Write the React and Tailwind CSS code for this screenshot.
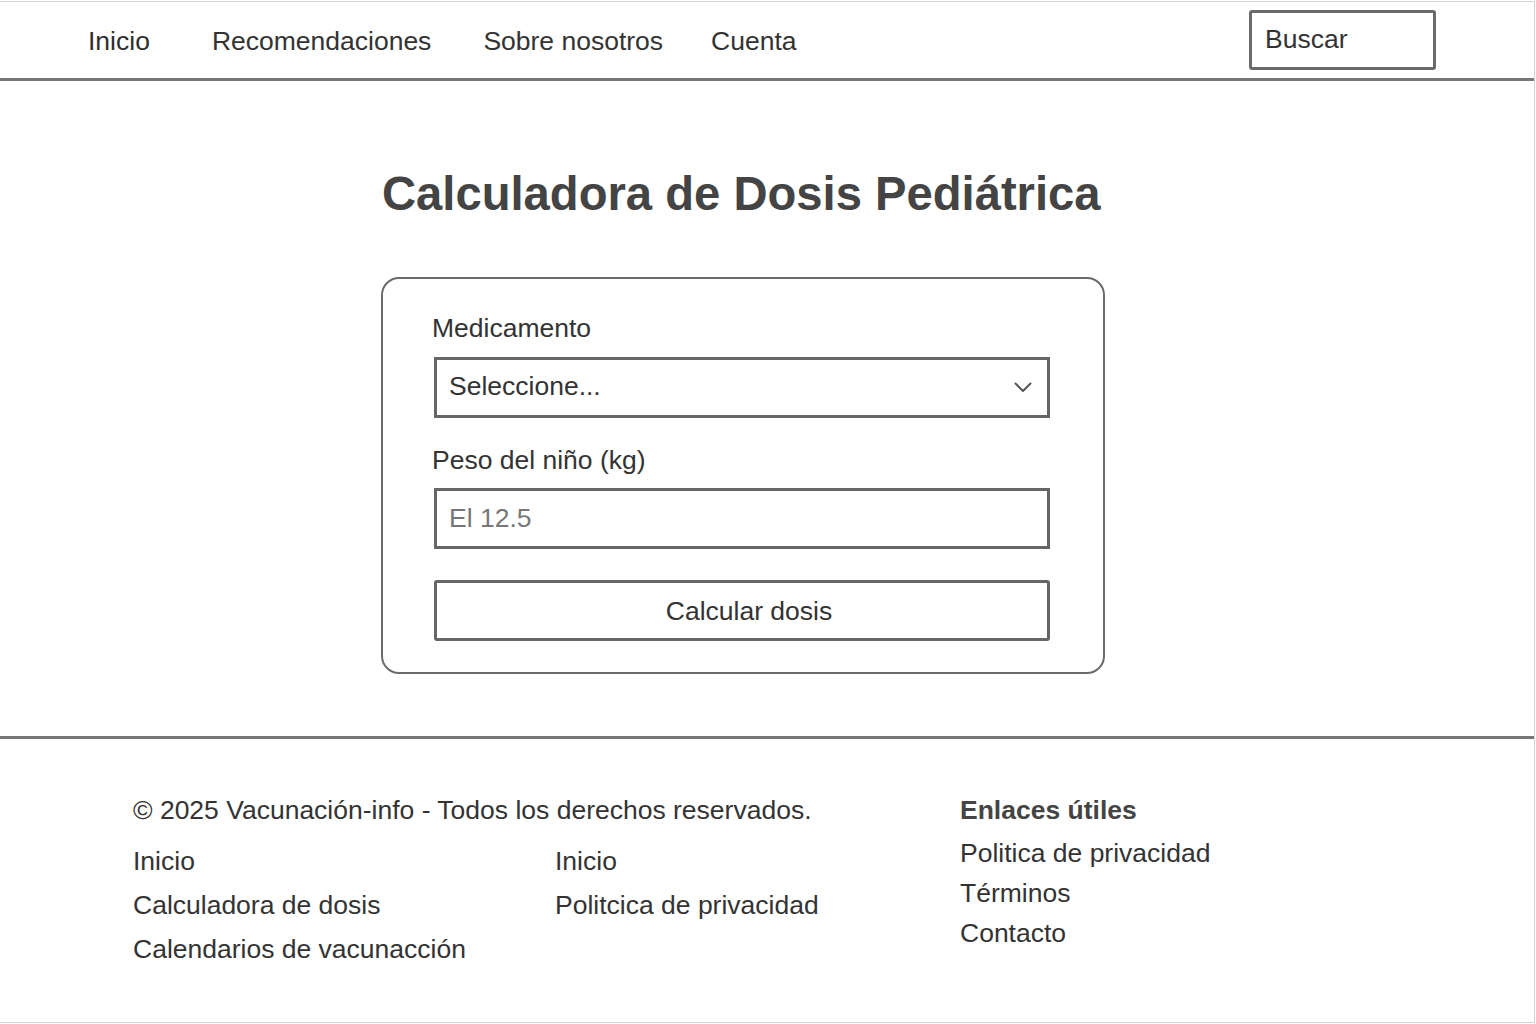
const navLinks = [
  { label: "Recomendaciones", cls: "ml-[62px]" },
  { label: "Sobre nosotros", cls: "ml-[52px]" },
  { label: "Cuenta", cls: "ml-[48px]" },
];

function Field({ label, children, className = "" }) {
  return (
    <div className={className}>
      <label className="-ml-[2px] block text-[26.5px] leading-none text-[#333]">{label}</label>
      <div className="mt-[15px]">{children}</div>
    </div>
  );
}

export default function App() {
  return (
    <div
      className="w-[1536px] h-[1024px] bg-white py-px"
      style={{ fontFamily: '"Liberation Sans", Arial, sans-serif' }}
    >
      <div className="flex h-full w-[1535px] flex-col border-y border-r border-[#d2d2d2]">
        {/* header */}
        <header className="flex h-[79px] shrink-0 items-center border-b-[3px] border-[#777] pl-[88px] pr-[98px] pt-[3px]">
          <nav className="flex items-center text-[26.5px] text-[#333]">
            <a className="font-medium text-[#2e2e2e]">Inicio</a>
            {navLinks.map((l) => (
              <a key={l.label} className={l.cls}>
                {l.label}
              </a>
            ))}
          </nav>
          <div className="-mt-[3px] ml-auto flex h-[60px] w-[187px] items-center rounded-[3px] border-[3px] border-[#6a6a6a] pl-[13px] text-[26.5px] text-[#333]">
            Buscar
          </div>
        </header>

        {/* main */}
        <main className="flex-1 pt-[89px]">
          <h1 className="pl-[382px] text-[47.2px] font-bold leading-none text-[#444]">
            Calculadora de Dosis Pediátrica
          </h1>

          <form className="ml-[381px] mt-[60px] w-[724px] rounded-[18px] border-2 border-[#6b6b6b] px-[51px] pb-[31px] pt-[36px]">
            <Field label="Medicamento">
              <div className="flex h-[61px] w-[616px] items-center justify-between border-[3px] border-[#666] pl-[12px] pr-[15px] text-[26.5px] text-[#333]">
                <span>Seleccione...</span>
                <svg width="18" height="11" viewBox="0 0 18 11" fill="none" className="mt-[1px]">
                  <path d="M1.5 1.5 L9 9 L16.5 1.5" stroke="#555" strokeWidth="2" strokeLinecap="round" strokeLinejoin="round" />
                </svg>
              </div>
            </Field>

            <Field label="Peso del niño (kg)" className="mt-[29px]">
              <div className="flex h-[61px] w-[616px] items-center border-[3px] border-[#666] pl-[12px] text-[26.5px] text-[#777]">
                El 12.5
              </div>
            </Field>

            <button
              type="button"
              className="mt-[31px] flex h-[61px] w-[616px] items-center justify-center rounded-[3px] border-[3px] border-[#666] pl-[14px] pt-[3px] text-[26.5px] text-[#333]"
            >
              Calcular dosis
            </button>
          </form>
        </main>

        {/* footer */}
        <footer className="flex h-[286px] shrink-0 border-t-[3px] border-[#777] pl-[133px] pt-[58px] text-[26.5px] text-[#333]">
          <div className="w-[827px]">
            <p className="leading-none">© 2025 Vacunación-info - Todos los derechos reservados.</p>
            <div className="mt-[15px] grid grid-cols-[422px_1fr] leading-[44px]">
              <ul>
                <li>Inicio</li>
                <li>Calculadora de dosis</li>
                <li>Calendarios de vacunacción</li>
              </ul>
              <ul>
                <li>Inicio</li>
                <li>Politcica de privacidad</li>
              </ul>
            </div>
          </div>
          <div className="-mt-[7px]">
            <h3 className="font-bold leading-[40px] text-[#444]">Enlaces útiles</h3>
            <ul className="mt-[3px] leading-[40px]">
              <li>Politica de privacidad</li>
              <li>Términos</li>
              <li>Contacto</li>
            </ul>
          </div>
        </footer>
      </div>
    </div>
  );
}
